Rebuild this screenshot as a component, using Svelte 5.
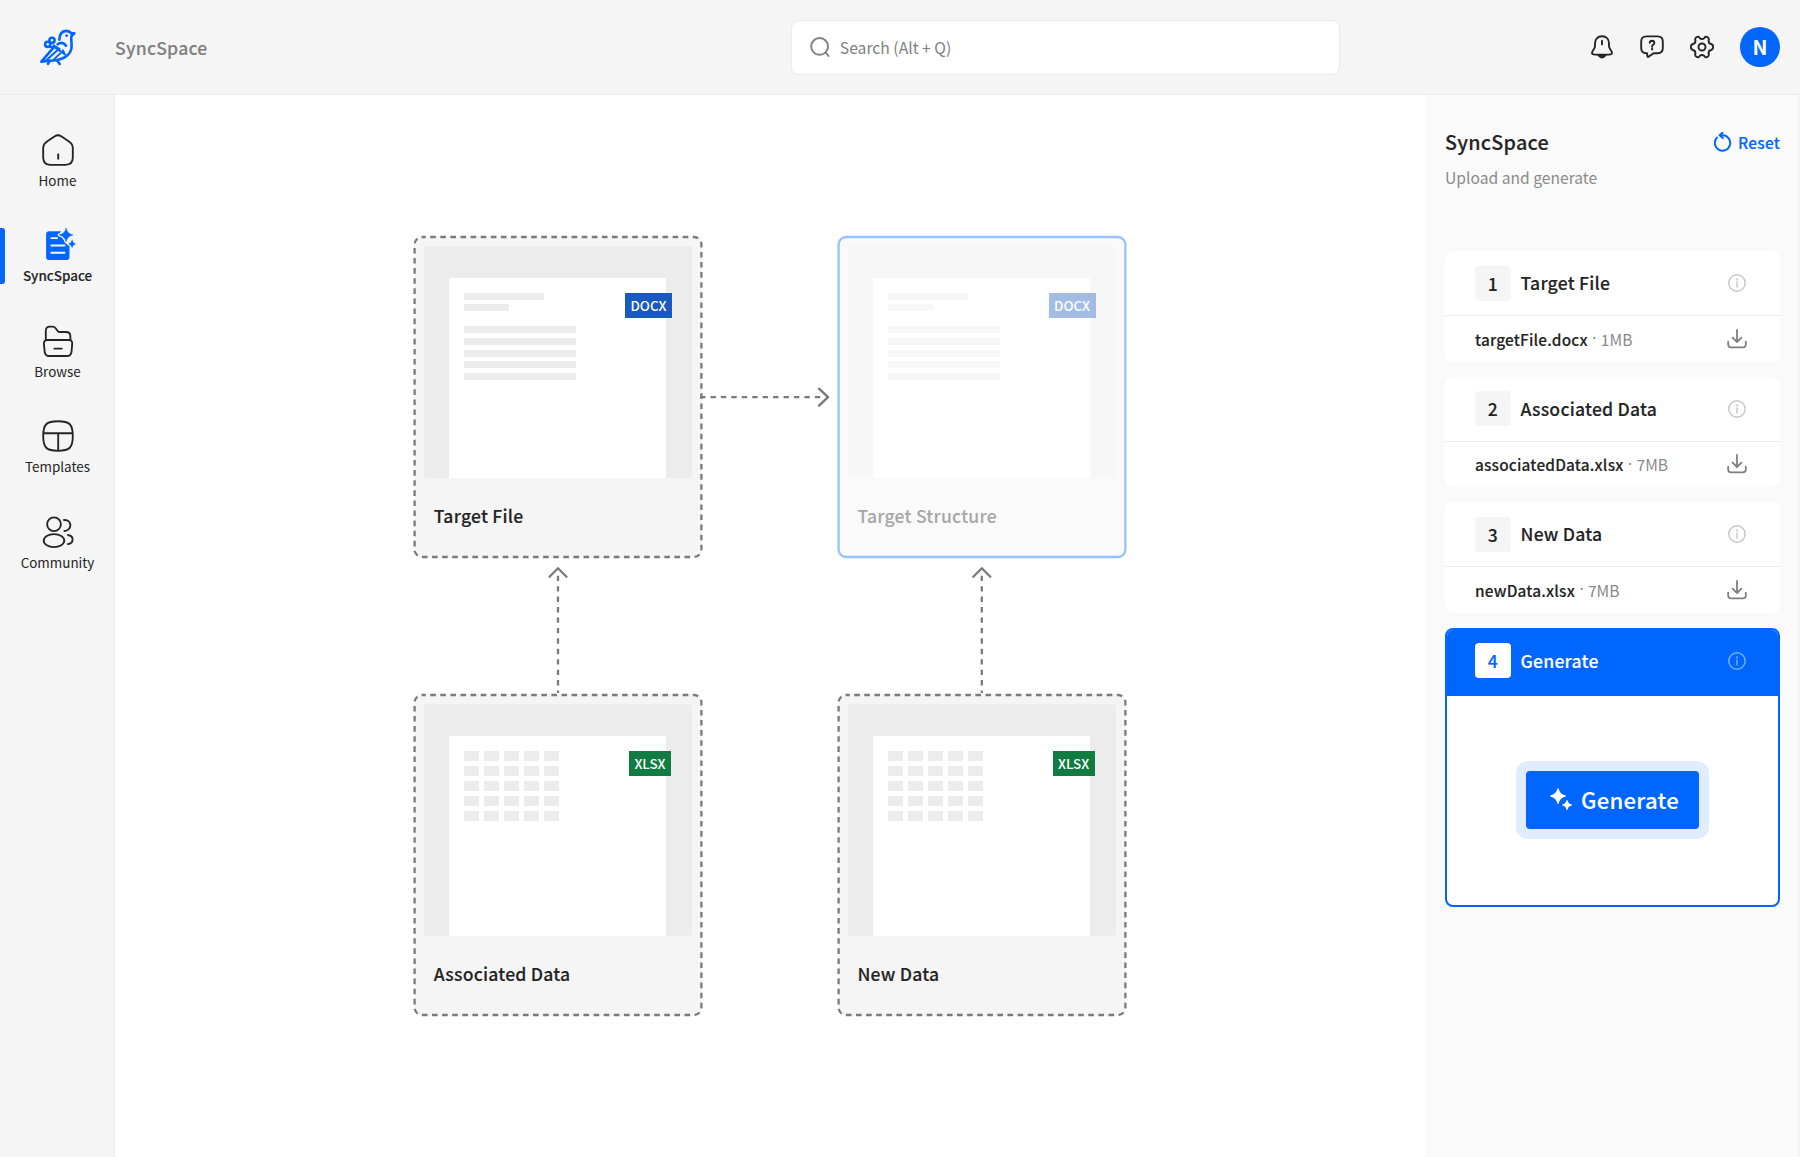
<script>
  const nav = [
    { id: 'home', label: 'Home' },
    { id: 'sync', label: 'SyncSpace', active: true },
    { id: 'browse', label: 'Browse' },
    { id: 'templates', label: 'Templates' },
    { id: 'community', label: 'Community' }
  ];
  const cards = [
    { title: 'Target File', type: 'docx' },
    { title: 'Target Structure', type: 'docx', selected: true },
    { title: 'Associated Data', type: 'xlsx' },
    { title: 'New Data', type: 'xlsx' }
  ];
  const steps = [
    { title: 'Target File', file: 'targetFile.docx', size: '1MB' },
    { title: 'Associated Data', file: 'associatedData.xlsx', size: '7MB' },
    { title: 'New Data', file: 'newData.xlsx', size: '7MB' }
  ];
</script>

{#snippet navIcon(id)}
  <svg class="nav-icon" viewBox="0 0 32 32">
    {#if id === 'home'}
      <path d="M12.8 2.3 Q16 .1 19.2 2.3 L27 7.4 Q30.8 10 30.8 14 V23.6 Q30.8 30.8 23.6 30.8 H8.4 Q1.2 30.8 1.2 23.6 V14 Q1.2 10 5 7.4 Z" />
      <path d="M16.2 20.3 V24.8" />
    {:else if id === 'sync'}
      <g transform="translate(-.9 -.9)">
        <path class="solid" d="M8 3.2 H20 L18 6 L22 11 L24 15 L28.4 18 V28.6 Q28.4 32 25 32 H8 Q5 32 5 28.6 V6.4 Q5 3.2 8 3.2 Z" />
        <path class="halo" d="M25 .2 Q26 6 31.8 6.9 Q26 7.9 25 13.6 Q24 7.9 18 6.9 Q24 6 25 .2 Z M31 12.2 Q31.5 15.2 34.5 15.8 Q31.5 16.4 31 19.4 Q30.5 16.4 27.5 15.8 Q30.5 15.2 31 12.2 Z" />
        <path class="solid star" d="M25 .2 Q26.2 5.7 31.8 6.9 Q26.2 8.1 25 13.6 Q23.8 8.1 18 6.9 Q23.8 5.7 25 .2 Z M31 12.2 Q31.6 15.1 34.5 15.8 Q31.6 16.5 31 19.4 Q30.4 16.5 27.5 15.8 Q30.4 15.1 31 12.2 Z" />
        <path class="rule" d="M10.2 10 H16 M10.2 17.4 H23.4 M10.2 24.6 H23.4" />
      </g>
    {:else if id === 'browse'}
      <path d="M3.8 15 V6 Q3.8 1.6 8 1.6 H10.6 Q12.4 1.6 13.6 3.2 L15.6 5.8 Q16.6 7 18.4 7 H24 Q28.4 7 28.4 11.4 V15" />
      <path d="M5.5 15 H26.7 Q30.6 15 30.2 19 L29.5 26.8 Q29 31 24.8 31 H7.3 Q3.2 31 2.7 26.8 L1.9 19 Q1.6 15 5.5 15 Z M12.4 23.6 H19.8" />
    {:else if id === 'templates'}
      <path d="M16 1.2 C27.6 1.2 30.8 4.4 30.8 16 S27.6 30.8 16 30.8 S1.2 27.6 1.2 16 S4.4 1.2 16 1.2 Z M1.5 13.2 H30.5 M16.2 13.2 V30.6" />
    {:else}
      <circle cx="12" cy="8.2" r="6.9" />
      <ellipse cx="12" cy="24.6" rx="10.3" ry="6.5" />
      <path d="M22 4 C26.2 3.6 28.4 6.5 28.4 9.3 S26 15 22.4 15 M26 19 C28.8 19.5 30.6 21.1 30.6 23.4 S28.8 27.6 25.8 28.1" />
    {/if}
  </svg>
{/snippet}

{#snippet info()}
  <svg class="info" viewBox="0 0 20 20"><circle cx="10" cy="10" r="8.2" /><path d="M10 9 V14 M10 5.7 V7" /></svg>
{/snippet}

<div class="app">
  <header>
    <div class="brand">
      <svg class="logo" viewBox="112 85 120 115">
        <path d="M179 120 Q180 95 199 93.5 Q210 94 214 101 L224 101 L215 110 Q214 120 216 134 Q217 156 203 167 Q190 179 168 182 L125 186 L162 143" />
        <circle cx="157" cy="122" r="7.8" /><circle cx="144" cy="134" r="7.8" />
        <path class="feather" d="M148 142 L162 141 L196 164 M162 137 L180 148 M174 151 L140 182 M184 159 L162 180 M190 152 L195 164" />
        <path d="M174 134 Q188 124 199 138" />
        <path d="M150 184 L145 193 M172 182 L180 193" />
        <circle class="eye" cx="201" cy="108" r="4" />
      </svg>
      <span class="semi">SyncSpace</span>
    </div>
    <div class="search">
      <svg viewBox="0 0 20 20"><circle cx="9.6" cy="9.4" r="8.4" /><path d="M15.6 15.4 L18.6 19" /></svg>
      <span>Search (Alt + Q)</span>
    </div>
    <div class="tools">
      <svg viewBox="0 0 24 24"><path d="M12 1.2 C7.4 1.2 5 4.5 5 8.5 V11 C5 14 2 15.6 2 17.8 C2 19.2 3.4 19.6 5 19.6 H19 C20.6 19.6 22 19.2 22 17.8 C22 15.6 19 14 19 11 V8.5 C19 4.5 16.6 1.2 12 1.2 Z M12 5.8 V9.4" /><path d="M8.4 20.2 Q12 24.8 15.6 20.2 Z" /></svg>
      <svg viewBox="0 0 24 24"><path d="M6.4 1.4 H17.6 Q22.8 1.4 22.8 6.6 V13 Q22.8 18.2 17.6 18.2 H13.6 L8.6 21.8 Q7.6 22.4 7.4 21.2 L7 18.2 H6.4 Q1.2 18.2 1.2 13 V6.6 Q1.2 1.4 6.4 1.4 Z" /><path d="M9.7 7.7 Q9.9 5.8 12 5.8 Q14.3 5.9 14.3 7.9 Q14.3 9.1 13.1 9.8 Q12.1 10.4 12.1 11.7 M12.1 13.6 V14.6" /></svg>
      <svg viewBox="0 0 24 24"><path d="M9.8 3.2 Q12 4.9 14.2 3.2 Q15.4 .8 17.6 2.2 Q19.4 3.3 18.6 5.6 Q18.4 8.5 21.2 9 Q23.2 9.8 23.2 12 Q23.2 14.2 21.2 15 Q18.4 15.5 18.6 18.4 Q19.4 20.7 17.6 21.8 Q15.4 23.2 14.2 20.8 Q12 19.1 9.8 20.8 Q8.6 23.2 6.4 21.8 Q4.6 20.7 5.4 18.4 Q5.6 15.5 2.8 15 Q.8 14.2 .8 12 Q.8 9.8 2.8 9 Q5.6 8.5 5.4 5.6 Q4.6 3.3 6.4 2.2 Q8.6 .8 9.8 3.2 Z" /><circle cx="12" cy="12" r="3.5" /></svg>
      <span class="avatar">N</span>
    </div>
  </header>

  <nav>
    {#each nav as item}
      <div class="nav-item" class:active={item.active}>
        {@render navIcon(item.id)}
        <span>{item.label}</span>
      </div>
    {/each}
  </nav>

  <main>
    <div class="board">
      {#each cards as card}
        <div class="card" class:selected={card.selected}>
          <svg class="frame" viewBox="0 0 288 322"><rect x=".6" y="1" width="286.8" height="320" rx="7.5" /></svg>
          <div class="preview">
            <div class="sheet">
              {#if card.type === 'docx'}
                <div class="lines">
                  <i class="medium"></i><i class="short"></i><i class="first"></i><i></i><i></i><i></i><i></i>
                </div>
              {:else}
                <div class="cells">
                  {#each Array(25) as _}<i></i>{/each}
                </div>
              {/if}
              <span class="badge {card.type}">{card.type.toUpperCase()}</span>
            </div>
          </div>
          <h3 class="semi">{card.title}</h3>
        </div>
      {/each}
      <svg class="links" viewBox="0 0 712 780">
        <g class="dash">
          <path d="M286 161.2 H407" />
          <path d="M144 339.7 V457" />
          <path d="M567.8 339.7 V457" />
        </g>
        <path d="M405 152.7 L414 161.2 L405 169.7 M135.5 340.8 L144 332.3 L152.5 340.8 M559.3 340.8 L567.8 332.3 L576.3 340.8" />
      </svg>
    </div>
  </main>

  <aside>
    <div class="panel-head">
      <h2 class="semi">SyncSpace</h2>
      <div class="reset">
        <svg viewBox="0 0 18 20"><path d="M3 5.6 A7.7 7.7 0 1 0 9 3.3 H6.2 M8.4 .8 L5.6 3.3 L8.8 6" /></svg>
        <span class="semi">Reset</span>
      </div>
    </div>
    <p>Upload and generate</p>

    <div class="steps">
      {#each steps as step, i}
        <section class="step">
          <div class="step-head">
            <b class="semi">{i + 1}</b>
            <h4 class="semi">{step.title}</h4>
            {@render info()}
          </div>
          <div class="step-file">
            <strong class="semi">{step.file}</strong>
            <span class="dot">·</span>
            <span class="size">{step.size}</span>
            <svg viewBox="0 0 20 20"><path d="M10 1 V12.6 M5.6 8.6 L10 13 L14.4 8.6 M1.2 12.6 V15.6 Q1.2 18.4 4 18.4 H16 Q18.8 18.4 18.8 15.6 V12.6" /></svg>
          </div>
        </section>
      {/each}
      <section class="step current">
        <div class="step-head">
          <b class="semi">4</b>
          <h4 class="semi">Generate</h4>
          {@render info()}
        </div>
        <div class="run">
          <button>
            <svg viewBox="0 0 22 22"><path d="M8 .8 Q9.4 6.6 15.4 8 Q9.4 9.4 8 15.4 Q6.6 9.4 .6 8 Q6.6 6.6 8 .8 Z M17 12.6 Q17.7 16.2 21.4 17 Q17.7 17.8 17 21.4 Q16.3 17.8 12.6 17 Q16.3 16.2 17 12.6 Z" /></svg>
            <span class="semi">Generate</span>
          </button>
        </div>
      </section>
    </div>
  </aside>
</div>

<style>
  :global(body) {
    margin: 0;
    background: #fff;
  }
  .app {
    display: grid;
    grid-template: 95px 1fr / 115px 1fr 375.4px;
    width: 1800px;
    height: 1157px;
    overflow: hidden;
    box-sizing: border-box;
    font-family: 'Noto Sans CJK SC', 'Noto Sans', sans-serif;
    color: #242424;
    background: #fff;
  }
  .app :global(*) {
    box-sizing: border-box;
  }
  .semi {
    letter-spacing: 0.012em;
    -webkit-text-stroke: 0.12px currentColor;
  }
  svg {
    display: block;
    flex: none;
    fill: none;
    stroke: currentColor;
    stroke-linecap: round;
    stroke-linejoin: round;
  }
  h2, h3, h4, p {
    margin: 0;
    font-weight: 500;
  }

  header {
    grid-column: 1 / -1;
    display: grid;
    grid-template-columns: 790.5px 549px 1fr;
    align-items: center;
    background: #f5f5f5;
    border-bottom: 1px solid #ebebeb;
  }
  .brand {
    display: flex;
    align-items: center;
    gap: 38px;
    padding: 1px 0 0 37px;
    font-size: 17.6px;
    font-weight: 500;
    line-height: 26px;
    color: #808080;
  }
  .brand span {
    padding-top: 1px;
  }
  .logo {
    width: 40px;
    height: 38.3px;
    color: #0066ff;
    stroke-width: 7.8;
  }
  .logo .feather {
    stroke-width: 6;
  }
  .logo .eye {
    fill: currentColor;
    stroke: none;
  }
  .search {
    display: flex;
    align-items: center;
    gap: 10.3px;
    height: 55px;
    padding-left: 18px;
    background: #fff;
    border: 1px solid #ebebeb;
    border-radius: 8px;
    font-size: 15.7px;
    color: #808080;
  }
  .search svg {
    width: 20px;
    height: 20px;
    stroke-width: 1.9;
  }
  .tools {
    display: flex;
    align-items: center;
    justify-content: flex-end;
    gap: 26px;
    padding: 0 20px 0 0;
  }
  .tools svg {
    width: 24px;
    height: 24px;
    stroke-width: 1.9;
  }
  .avatar {
    width: 40px;
    height: 40px;
    border-radius: 50%;
    background: #0066ff;
    color: #fff;
    font-size: 20px;
    font-weight: 700;
    line-height: 39px;
    text-align: center;
  }

  nav {
    padding: 23.5px 0 0 1px;
    background: #f5f5f5;
    border-right: 1px solid #ebebeb;
  }
  .nav-item {
    position: relative;
    display: flex;
    flex-direction: column;
    align-items: center;
    gap: 5px;
    height: 95.4px;
    padding-top: 15.5px;
    font-size: 13.45px;
    line-height: 18px;
  }
  .nav-icon {
    width: 32px;
    height: 32px;
    stroke-width: 1.85;
    overflow: visible;
  }
  .nav-item.active {
    font-weight: 500;
  }
  .nav-item.active span {
    -webkit-text-stroke: 0.12px currentColor;
  }
  .nav-item.active::before {
    content: '';
    position: absolute;
    left: -1px;
    top: 14px;
    width: 5px;
    height: 56px;
    border-radius: 0 3px 3px 0;
    background: #0066ff;
  }
  .solid {
    fill: #0066ff;
    stroke: none;
  }
  .star {
    stroke: #0066ff;
    stroke-width: 0.5;
  }
  .halo {
    fill: #f5f5f5;
    stroke: #f5f5f5;
    stroke-width: 2.8;
  }
  .rule {
    stroke: #f5f5f5;
    stroke-width: 1.9;
  }

  main {
    padding: 141px 0 0 299px;
  }
  .board {
    position: relative;
    display: grid;
    grid-template-columns: 288px 288px;
    grid-auto-rows: 322px;
    gap: 135.5px 135.6px;
    width: 712px;
  }
  .card {
    position: relative;
    padding: 10px;
    background: #f5f5f5;
    border-radius: 8px;
  }
  .frame {
    position: absolute;
    inset: 0;
    width: 288px;
    height: 322px;
    overflow: visible;
    color: #7a7a7a;
    stroke-width: 2.3;
    stroke-linecap: butt;
    stroke-dasharray: 5.6 4.5;
    stroke-dashoffset: 2;
  }
  .card.selected {
    opacity: 0.4;
  }
  .selected .frame {
    color: #0066ff;
    stroke-dasharray: none;
  }
  .preview {
    height: 232px;
    padding: 32px 26px 0 25px;
    background: #ececec;
    border-radius: 4px;
  }
  .sheet {
    position: relative;
    height: 200px;
    padding: 14.7px 15px;
    background: #fff;
  }
  .lines {
    display: grid;
    gap: 4.7px;
  }
  .lines i {
    width: 112px;
    height: 7px;
    background: #ececec;
  }
  .lines .medium {
    width: 80px;
  }
  .lines .short {
    width: 45px;
  }
  .lines .first {
    margin-top: 10.3px;
  }
  .cells {
    display: grid;
    grid-template-columns: repeat(5, 15px);
    grid-auto-rows: 10px;
    gap: 5px;
    padding-top: 0.4px;
  }
  .cells i {
    background: #ececec;
  }
  .badge {
    position: absolute;
    top: 14.6px;
    right: -6px;
    width: 47px;
    height: 25.4px;
    color: #fff;
    font-size: 13.4px;
    font-weight: 500;
    line-height: 25.4px;
    text-align: center;
  }
  .docx {
    background: #185abd;
  }
  .xlsx {
    top: 15px;
    right: -5px;
    width: 42px;
    background: #107c41;
  }
  h3 {
    padding: 25px 0 0 9.8px;
    font-size: 17.6px;
    line-height: 26px;
  }
  .links {
    position: absolute;
    left: 0;
    top: 0;
    width: 712px;
    height: 780px;
    color: #7a7a7a;
    stroke-width: 2.3;
  }
  .dash {
    stroke-linecap: butt;
    stroke-dasharray: 5.4 5.04;
  }

  aside {
    padding: 31px 18px 0 20.4px;
    background: #fafafa;
    border-right: 2px solid #f3f3f3;
  }
  .panel-head {
    display: flex;
    align-items: center;
    justify-content: space-between;
  }
  h2 {
    font-size: 19.8px;
    line-height: 32px;
  }
  .reset {
    display: flex;
    align-items: center;
    gap: 6px;
    color: #0066ff;
    font-size: 15.5px;
    font-weight: 500;
    line-height: 24px;
  }
  .reset svg {
    width: 18px;
    height: 20px;
    stroke-width: 2;
  }
  p {
    margin-top: 8px;
    font-size: 15.65px;
    font-weight: 400;
    line-height: 24px;
    color: #8a8a8a;
  }
  .steps {
    display: grid;
    gap: 15px;
    margin-top: 61px;
  }
  .step {
    height: 110.6px;
    background: #fff;
    border-radius: 8px;
    overflow: hidden;
  }
  .step-head {
    display: flex;
    align-items: center;
    gap: 10px;
    height: 65px;
    padding: 0.6px 32.6px 0 30px;
    border-bottom: 1px solid #ebebeb;
  }
  .step-head b {
    width: 35.5px;
    height: 35px;
    border-radius: 4px;
    background: #f5f5f5;
    font-size: 17.5px;
    font-weight: 500;
    line-height: 35px;
    text-align: center;
  }
  h4 {
    flex: 1;
    font-size: 17.6px;
    line-height: 26px;
  }
  .info {
    width: 20px;
    height: 20px;
    color: #c8c8c8;
    stroke-width: 1.5;
  }
  .step-file {
    display: flex;
    align-items: center;
    gap: 3.5px;
    height: 45.6px;
    padding: 0 32.6px 0 30px;
    font-size: 15.4px;
  }
  .step-file strong {
    font-weight: 500;
  }
  .dot,
  .size {
    color: #8a8a8a;
  }
  .dot {
    width: 6px;
    font-family: 'Noto Sans', sans-serif;
    text-align: center;
  }
  .size {
    flex: 1;
    font-size: 15.6px;
  }
  .step-file svg {
    width: 20px;
    height: 20px;
    color: #808080;
    stroke-width: 1.8;
  }
  .current {
    height: 279px;
    border: 2px solid #0066ff;
  }
  .current .step-head {
    height: 66px;
    padding: 0 30.6px 4px 28px;
    border: 0;
    background: #0066ff;
    color: #fff;
  }
  .current b {
    background: #fff;
    color: #0066ff;
  }
  .current .info {
    color: #73adff;
  }
  .run {
    display: flex;
    justify-content: center;
    padding-top: 75px;
  }
  button {
    display: flex;
    align-items: center;
    gap: 9px;
    width: 173px;
    height: 58px;
    padding: 0 0 1px 24px;
    border: 0;
    border-radius: 4px;
    background: #0066ff;
    box-shadow: 0 0 0 10px #e0ecff;
    color: #fff;
    font: inherit;
    font-size: 22.1px;
    font-weight: 500;
  }
  button svg {
    width: 22px;
    height: 22px;
    fill: currentColor;
    stroke-width: 1.2;
  }
</style>
